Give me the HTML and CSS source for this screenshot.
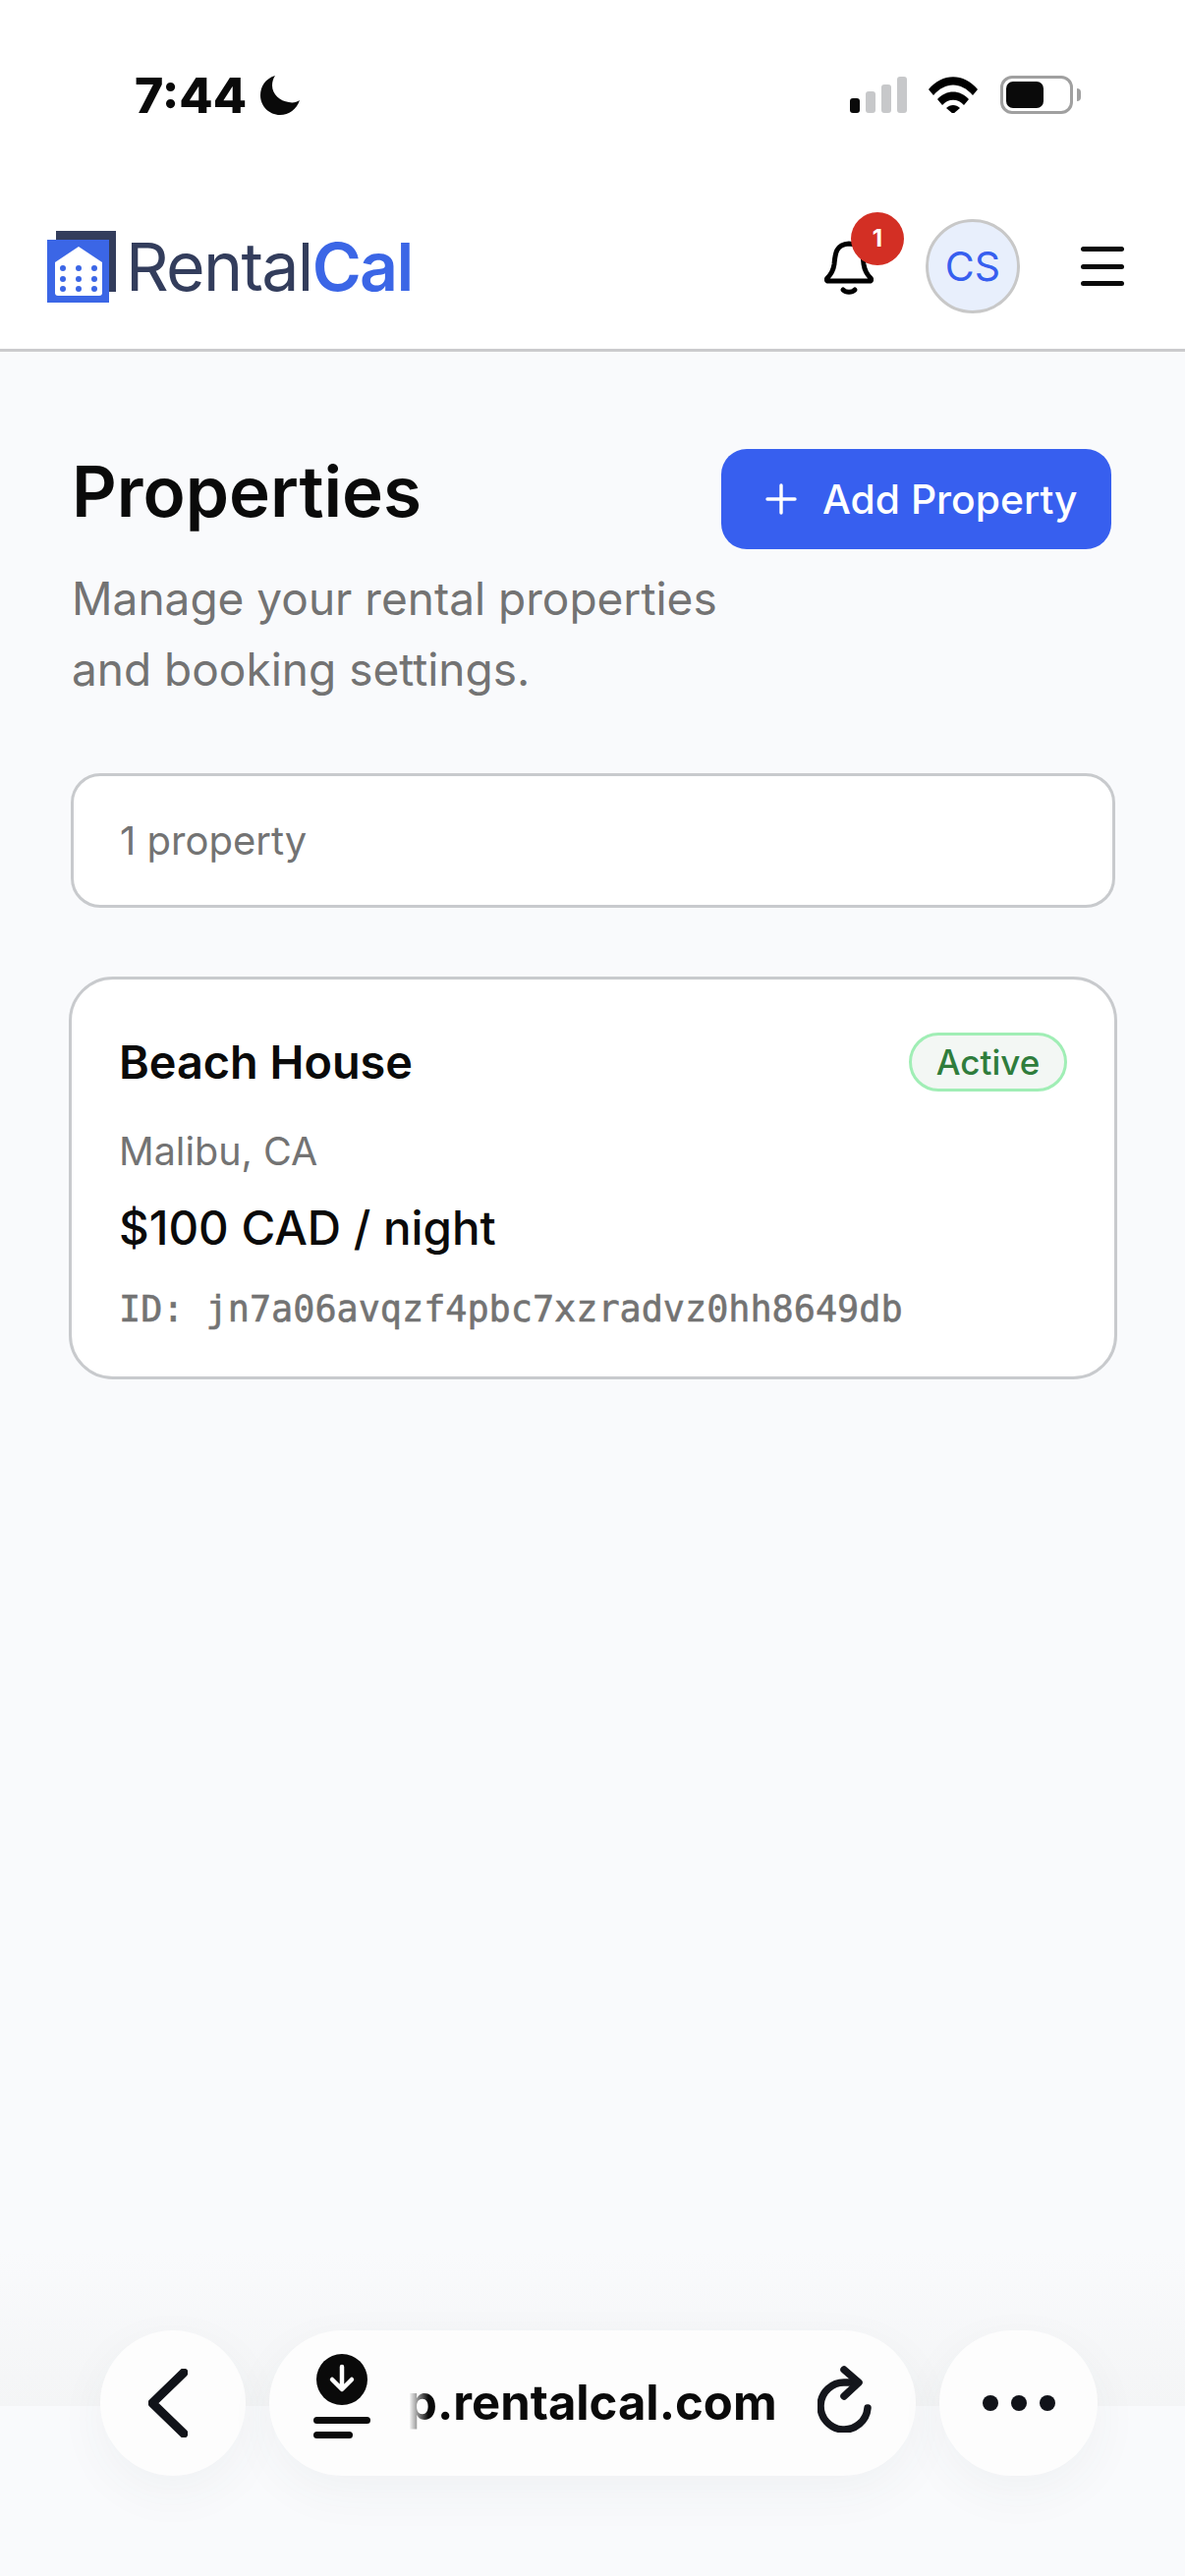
FILE: index.html
```html
<!DOCTYPE html>
<html lang="en">
<head>
    <meta charset="UTF-8">
    <title>RentalCal - Properties</title>
    <meta name="viewport" content="width=device-width, initial-scale=1.0">
    <link rel="stylesheet" href="styles.css">
</head>
<body>
<div class="screen">
    <div class="status">
        <div class="status-left">
            <span class="time">7:44</span>
            <svg class="moon" viewBox="0 0 40 40"><path d="M15 0C5 3 0 11 0 20c0 11 9 20 20 20 9 0 17-6 20-15-3 2-7 3-11 2C20 26 12 19 12 10c0-4 1-7 3-10z"/></svg>
        </div>
        <div class="status-right">
            <div class="signal">
                <i class="bar bar-on b1"></i><i class="bar b2"></i><i class="bar b3"></i><i class="bar b4"></i>
            </div>
            <svg class="wifi" viewBox="0 0 50 37">
                <path d="M0 13C14-4 36-4 50 13l-5 6C33 5 17 5 5 19z"/>
                <path d="M9 23c9-10 23-10 32 0l-5 6c-6-7-16-7-22 0z"/>
                <path d="M18 32c4-4 10-4 14 0l-7 6z"/>
            </svg>
            <div class="battery"><div class="battery-fill"></div></div>
            <div class="battery-nub"></div>
        </div>
    </div>

    <header class="topbar">
        <div class="brand">
            <div class="logo">
                <div class="logo-back"></div>
                <div class="logo-front">
                    <svg class="logo-house" viewBox="0 0 48 50">
                        <path d="M24 0L48 16V47a3 3 0 0 1-3 3H3a3 3 0 0 1-3-3V16z" fill="#fff"/>
                        <g fill="#3b66e6">
                            <circle cx="8" cy="22" r="3"/><circle cx="24" cy="22" r="3"/><circle cx="40" cy="22" r="3"/>
                            <circle cx="8" cy="33" r="3"/><circle cx="24" cy="33" r="3"/><circle cx="40" cy="33" r="3"/>
                            <circle cx="8" cy="43" r="3"/><circle cx="24" cy="43" r="3"/><circle cx="40" cy="43" r="3"/>
                        </g>
                    </svg>
                </div>
            </div>
            <div class="brand-name">Rental<b>Cal</b></div>
        </div>
        <div class="top-actions">
            <div class="bell">
                <svg viewBox="0 0 50 56" fill="none" stroke="#000" stroke-width="5" stroke-linecap="round" stroke-linejoin="round">
                    <path d="M4 42c-2 0-2-2-1-3 4-4 6-7 7-14 1-10 1-20 15-21 14 1 14 11 15 21 1 7 3 10 7 14 1 1 1 3-1 3z"/>
                    <path d="M19 51c3 3 9 3 12 0"/>
                </svg>
                <span class="badge">1</span>
            </div>
            <div class="avatar">CS</div>
            <div class="menu"><i></i><i></i><i></i></div>
        </div>
    </header>

    <main class="content">
        <div class="page-head">
            <div>
                <h1 class="title">Properties</h1>
                <p class="subtitle">Manage your rental properties<br>and booking settings.</p>
            </div>
            <button class="add-btn">
                <svg viewBox="0 0 32 32" stroke="#fff" stroke-width="3.4" stroke-linecap="round"><path d="M16 2V30M2 16H30"/></svg>
                Add Property
            </button>
        </div>

        <div class="count-box">1 property</div>

        <div class="card">
            <div class="card-head">
                <div class="card-name">Beach House</div>
                <span class="pill">Active</span>
            </div>
            <div class="card-place">Malibu, CA</div>
            <div class="card-price">$100 CAD / night</div>
            <div class="card-id">ID: jn7a06avqzf4pbc7xzradvz0hh8649db</div>
        </div>
    </main>

    <div class="browser-bar">
        <div class="round-btn back-btn">
            <svg viewBox="0 0 40 70" fill="none" stroke="#111319" stroke-width="9" stroke-linecap="round" stroke-linejoin="round"><path d="M36 4L4 35l32 31"/></svg>
        </div>
        <div class="url-pill">
            <svg class="dl-icon" viewBox="0 0 58 90">
                <circle cx="29" cy="26" r="26" fill="#0a0a0a"/>
                <path d="M29 13V35M19 26l10 10 10-10" fill="none" stroke="#fff" stroke-width="4.5" stroke-linecap="round" stroke-linejoin="round"/>
                <rect y="64" width="58" height="7" rx="3.5" fill="#0a0a0a"/>
                <rect y="79" width="40" height="7" rx="3.5" fill="#0a0a0a"/>
            </svg>
            <span class="url">p.rentalcal.com</span>
            <svg class="reload" viewBox="0 0 56 68" fill="none" stroke="#14161c" stroke-width="7.5" stroke-linecap="round" stroke-linejoin="round">
                <path d="M51 43A24 24 0 1 1 28 17h10"/>
                <path d="M27 4l15 13-15 14"/>
            </svg>
        </div>
        <div class="round-btn more-btn"><i></i><i></i><i></i></div>
    </div>
</div>
</body>
</html>
```

FILE: styles.css
```css
*{
    box-sizing: border-box;
}
body{
    margin: 0;
    background-color: #f9fafc;
    font-family: Inter, "Liberation Sans", sans-serif;
    color: #0a0a0a;
}
.screen{
    display: flex;
    flex-direction: column;
    height: 2622px;
    overflow: hidden;
}

/* phone status bar */
.status{
    display: flex;
    justify-content: space-between;
    align-items: center;
    height: 190px;
    padding: 3px 106px 0 137px;
    background-color: #fff;
}
.status-left{
    display: flex;
    align-items: center;
    gap: 14px;
}
.time{
    font-size: 50px;
    font-weight: 800;
    line-height: 40px;
}
.moon{
    width: 40px;
    height: 40px;
    fill: #0a0a0a;
}
.status-right{
    display: flex;
    align-items: center;
}
.signal{
    display: flex;
    align-items: flex-end;
    gap: 6px;
    height: 37px;
}
.bar{
    width: 10px;
    border-radius: 3px;
    background-color: #c7c8ca;
}
.bar-on{
    background-color: #0a0a0a;
}
.b1{ height: 15px; }
.b2{ height: 22px; }
.b3{ height: 29px; }
.b4{ height: 37px; }
.wifi{
    width: 50px;
    height: 37px;
    margin-left: 22px;
    margin-right: 23px;
}
.battery{
    width: 74px;
    height: 39px;
    padding: 3px;
    border: 3px solid #a0a0a0;
    border-radius: 12px;
}
.battery-fill{
    width: 38px;
    height: 100%;
    border-radius: 7px;
    background-color: #0a0a0a;
}
.battery-nub{
    width: 4px;
    height: 13px;
    margin-left: 4px;
    border-radius: 0 4px 4px 0;
    background-color: #a0a0a0;
}

/* app header */
.topbar{
    display: flex;
    justify-content: space-between;
    align-items: center;
    height: 168px;
    padding: 0 62px 3px 48px;
    background-color: #fff;
    border-bottom: 3px solid #cbcbcd;
}
.brand{
    display: flex;
    align-items: center;
    gap: 10px;
}
.logo{
    position: relative;
    width: 70px;
    height: 73px;
}
.logo-back{
    position: absolute;
    top: 0;
    right: 0;
    width: 61px;
    height: 62px;
    background-color: #333d5c;
}
.logo-front{
    position: absolute;
    left: 0;
    bottom: 0;
    width: 63px;
    height: 64px;
    padding: 7px 7px 7px 8px;
    background-color: #3b66e6;
}
.logo-house{
    display: block;
    width: 48px;
    height: 50px;
}
.brand-name{
    font-size: 68px;
    line-height: 70px;
    letter-spacing: -1.7px;
    color: #333d5c;
}
.brand-name b{
    font-weight: 600;
    color: #3b66e6;
}
.top-actions{
    display: flex;
    align-items: center;
}
.bell{
    position: relative;
    width: 50px;
    height: 56px;
    margin-top: 2px;
}
.bell svg{
    display: block;
    width: 50px;
    height: 56px;
}
.badge{
    position: absolute;
    top: -28px;
    left: 27px;
    width: 54px;
    height: 54px;
    border-radius: 50%;
    background-color: #d32f24;
    color: #fff;
    font-size: 24px;
    font-weight: 700;
    line-height: 54px;
    text-align: center;
}
.avatar{
    width: 96px;
    height: 96px;
    margin-left: 53px;
    border: 3px solid #c8c8c8;
    border-radius: 50%;
    background-color: #e8effc;
    color: #375fef;
    font-size: 41px;
    line-height: 90px;
    text-align: center;
}
.menu{
    display: flex;
    flex-direction: column;
    gap: 12.5px;
    width: 44px;
    margin-left: 62px;
}
.menu i{
    height: 5px;
    border-radius: 3px;
    background-color: #0a0a0a;
}

/* page content */
.content{
    flex: 1;
    padding: 99px 71px 0 72px;
}
.page-head{
    display: flex;
    justify-content: space-between;
    align-items: flex-start;
    padding-left: 1px;
}
.title{
    margin: 0;
    font-size: 71px;
    font-weight: 600;
    line-height: 86px;
}
.subtitle{
    margin: 30px 0 0;
    font-size: 46px;
    line-height: 72px;
    color: #737373;
}
.add-btn{
    display: flex;
    align-items: center;
    gap: 26px;
    width: 397px;
    height: 102px;
    margin-right: 4px;
    padding: 0 0 0 45px;
    border: 0;
    border-radius: 26px;
    background-color: #375fef;
    color: #fff;
    font-family: inherit;
    font-size: 40.8px;
    font-weight: 500;
}
.add-btn svg{
    width: 32px;
    height: 32px;
}
.count-box{
    height: 137px;
    margin-top: 70px;
    padding-left: 47px;
    border: 3px solid #c8cacd;
    border-radius: 30px;
    background-color: #fff;
    color: #737373;
    font-size: 40px;
    line-height: 131px;
}
.card{
    height: 410px;
    margin-top: 70px;
    margin-left: -2px;
    margin-right: -2px;
    padding: 54px 48px 0 48px;
    border: 3px solid #c8cacd;
    border-radius: 45px;
    background-color: #fff;
}
.card-head{
    display: flex;
    justify-content: space-between;
    align-items: center;
}
.card-name{
    font-size: 46.8px;
    font-weight: 600;
}
.pill{
    width: 161px;
    height: 60px;
    border: 3px solid #a0eeb5;
    border-radius: 30px;
    background-color: #f3f7f4;
    color: #2f7d3c;
    font-size: 35px;
    font-weight: 500;
    line-height: 54px;
    text-align: center;
}
.card-place{
    margin-top: 36px;
    font-size: 39.5px;
    line-height: 50px;
    color: #737373;
}
.card-price{
    margin-top: 25px;
    font-size: 47.5px;
    font-weight: 500;
    line-height: 56px;
}
.card-id{
    margin-top: 32px;
    font-family: "DejaVu Sans Mono", "Liberation Mono", monospace;
    font-size: 36.8px;
    line-height: 46px;
    color: #737373;
    -webkit-text-stroke: .6px #737373;
}

/* browser toolbar */
.browser-bar{
    display: flex;
    align-items: flex-end;
    gap: 24px;
    height: 330px;
    padding: 0 89px 102px 102px;
    background: linear-gradient(#f9fafc 0, #f4f5f6 157px, #f9fafc 157px);
}
.round-btn,.url-pill{
    height: 148px;
    border-radius: 74px;
    background-color: #fdfdfd;
    box-shadow: 0 16px 50px rgba(60,70,70,.05);
}
.round-btn{
    display: flex;
    justify-content: center;
    align-items: center;
}
.back-btn{
    width: 148px;
}
.back-btn svg{
    width: 40px;
    height: 70px;
    margin-left: -10px;
}
.url-pill{
    display: flex;
    align-items: center;
    flex: 1;
    padding: 0 44px 0 45px;
}
.dl-icon{
    width: 58px;
    height: 90px;
    margin-bottom: 10px;
}
.url{
    position: relative;
    margin-left: 37px;
    font-size: 49px;
    font-weight: 700;
    line-height: 60px;
}
.url::before{
    content: "";
    position: absolute;
    top: 0;
    left: 0;
    width: 22px;
    height: 100%;
    background: linear-gradient(90deg, #fdfdfd 10%, rgba(253,253,253,0));
}
.reload{
    width: 56px;
    height: 68px;
    margin-left: auto;
    margin-bottom: 8px;
}
.more-btn{
    gap: 13px;
    width: 161px;
}
.more-btn i{
    width: 16px;
    height: 16px;
    border-radius: 50%;
    background-color: #111319;
}
```
